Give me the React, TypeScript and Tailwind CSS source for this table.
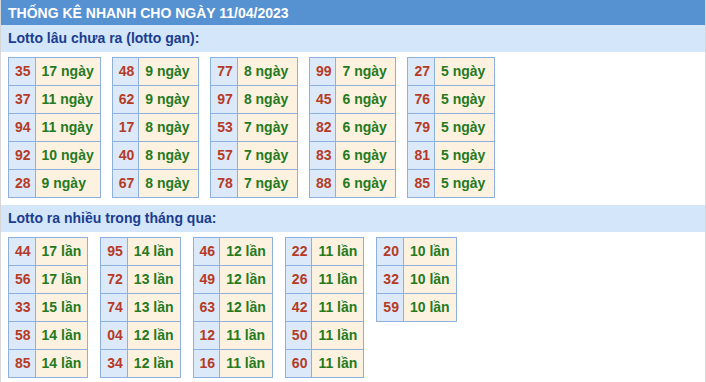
import React from 'react'

type Row = [string, string]

const gan: Row[][] = [
  [['35', '17 ngày'], ['37', '11 ngày'], ['94', '11 ngày'], ['92', '10 ngày'], ['28', '9 ngày']],
  [['48', '9 ngày'], ['62', '9 ngày'], ['17', '8 ngày'], ['40', '8 ngày'], ['67', '8 ngày']],
  [['77', '8 ngày'], ['97', '8 ngày'], ['53', '7 ngày'], ['57', '7 ngày'], ['78', '7 ngày']],
  [['99', '7 ngày'], ['45', '6 ngày'], ['82', '6 ngày'], ['83', '6 ngày'], ['88', '6 ngày']],
  [['27', '5 ngày'], ['76', '5 ngày'], ['79', '5 ngày'], ['81', '5 ngày'], ['85', '5 ngày']],
]

const nhieu: Row[][] = [
  [['44', '17 lần'], ['56', '17 lần'], ['33', '15 lần'], ['58', '14 lần'], ['85', '14 lần']],
  [['95', '14 lần'], ['72', '13 lần'], ['74', '13 lần'], ['04', '12 lần'], ['34', '12 lần']],
  [['46', '12 lần'], ['49', '12 lần'], ['63', '12 lần'], ['12', '11 lần'], ['16', '11 lần']],
  [['22', '11 lần'], ['26', '11 lần'], ['42', '11 lần'], ['50', '11 lần'], ['60', '11 lần']],
  [['20', '10 lần'], ['32', '10 lần'], ['59', '10 lần']],
]

function LotoTable({ rows, wide }: { rows: Row[]; wide?: boolean }) {
  return (
    <table className="border-collapse whitespace-nowrap">
      <tbody>
        {rows.map(([num, val]) => (
          <tr key={num}>
            <td className="h-[28px] border border-[#8eb0de] bg-[#dce9f9] pl-[6px] pr-[4px] py-0 text-[#b63b26]">{num}</td>
            <td className={`h-[28px] border border-[#8eb0de] bg-[#fdf2df] px-[6px] py-0 text-left text-[#257a1f] ${wide ? 'w-[60px]' : ''}`}>{val}</td>
          </tr>
        ))}
      </tbody>
    </table>
  )
}

export default function App() {
  return (
    <div className="w-[706px] h-[382px] overflow-hidden bg-white font-['Liberation_Sans',Arial,sans-serif] text-[14px] font-bold">
      <div className="h-[382px] border-x border-[#d6d6d6]">
        <div className="h-[25px] bg-[#5692d2] px-[7px] leading-[26px] text-white">THỐNG KÊ NHANH CHO NGÀY 11/04/2023</div>

        <div className="h-[27px] bg-[#d3e6fa] px-[7px] leading-[27px] text-[#1b3d8f]">Lotto lâu chưa ra (lotto gan):</div>
        <div className="flex items-start gap-[11px] px-[7px] pt-[5px] pb-[7px]">
          {gan.map((t, i) => (
            <LotoTable key={i} rows={t} wide />
          ))}
        </div>

        <div className="h-[27px] bg-[#d3e6fa] px-[7px] leading-[27px] text-[#1b3d8f]">Lotto ra nhiều trong tháng qua:</div>
        <div className="flex items-start gap-[12px] px-[7px] pt-[5px]">
          {nhieu.map((t, i) => (
            <LotoTable key={i} rows={t} />
          ))}
        </div>
      </div>
    </div>
  )
}
